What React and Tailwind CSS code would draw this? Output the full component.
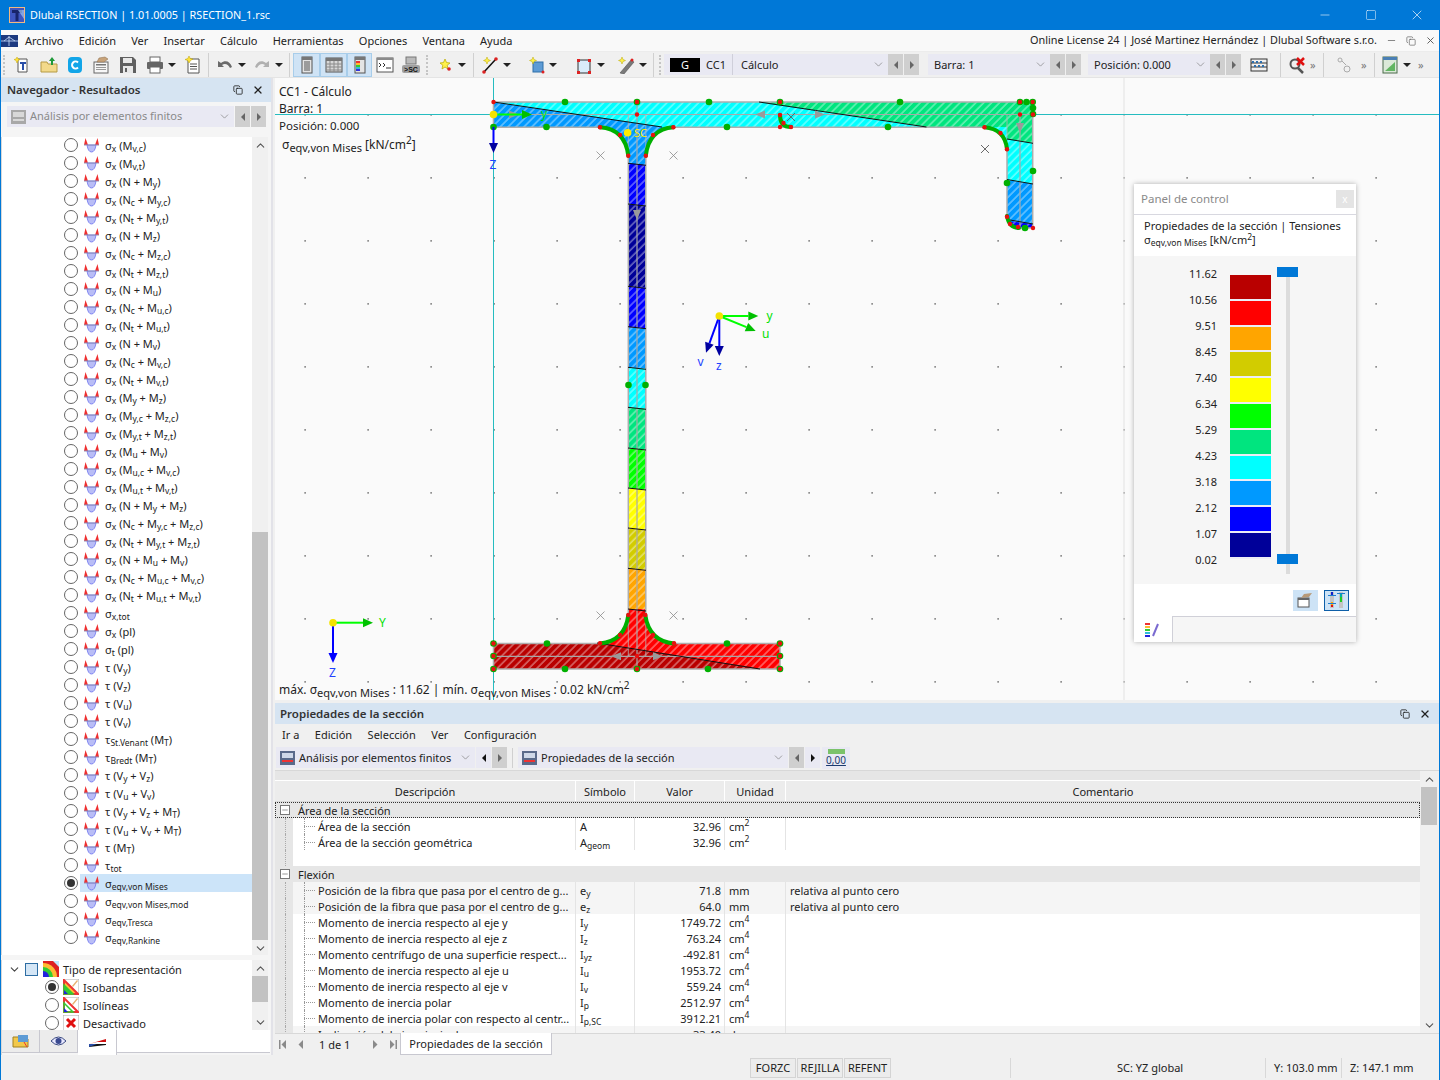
import React from "react";
import { ChevronDown, ChevronUp, Minus, Square, X, Copy } from "lucide-react";

const FONT = "font-['Noto_Sans',sans-serif]";

const LEGEND = [
	["11.62", "#b90000"],
	["10.56", "#ff0000"],
	["9.51", "#ffa500"],
	["8.45", "#d2cc00"],
	["7.40", "#ffff00"],
	["6.34", "#00ff00"],
	["5.29", "#00e57f"],
	["4.23", "#00ffff"],
	["3.18", "#0099ff"],
	["2.12", "#0000ff"],
	["1.07", "#000099"],
];

const RESULTS = [
	"σ_{x} (M_{v,c})",
	"σ_{x} (M_{v,t})",
	"σ_{x} (N + M_{y})",
	"σ_{x} (N_{c} + M_{y,c})",
	"σ_{x} (N_{t} + M_{y,t})",
	"σ_{x} (N + M_{z})",
	"σ_{x} (N_{c} + M_{z,c})",
	"σ_{x} (N_{t} + M_{z,t})",
	"σ_{x} (N + M_{u})",
	"σ_{x} (N_{c} + M_{u,c})",
	"σ_{x} (N_{t} + M_{u,t})",
	"σ_{x} (N + M_{v})",
	"σ_{x} (N_{c} + M_{v,c})",
	"σ_{x} (N_{t} + M_{v,t})",
	"σ_{x} (M_{y} + M_{z})",
	"σ_{x} (M_{y,c} + M_{z,c})",
	"σ_{x} (M_{y,t} + M_{z,t})",
	"σ_{x} (M_{u} + M_{v})",
	"σ_{x} (M_{u,c} + M_{v,c})",
	"σ_{x} (M_{u,t} + M_{v,t})",
	"σ_{x} (N + M_{y} + M_{z})",
	"σ_{x} (N_{c} + M_{y,c} + M_{z,c})",
	"σ_{x} (N_{t} + M_{y,t} + M_{z,t})",
	"σ_{x} (N + M_{u} + M_{v})",
	"σ_{x} (N_{c} + M_{u,c} + M_{v,c})",
	"σ_{x} (N_{t} + M_{u,t} + M_{v,t})",
	"σ_{x,tot}",
	"σ_{x} (pl)",
	"σ_{t} (pl)",
	"τ (V_{y})",
	"τ (V_{z})",
	"τ (V_{u})",
	"τ (V_{v})",
	"τ_{St.Venant} (M_{T})",
	"τ_{Bredt} (M_{T})",
	"τ (V_{y} + V_{z})",
	"τ (V_{u} + V_{v})",
	"τ (V_{y} + V_{z} + M_{T})",
	"τ (V_{u} + V_{v} + M_{T})",
	"τ (M_{T})",
	"τ_{tot}",
	"σ_{eqv,von Mises}",
	"σ_{eqv,von Mises,mod}",
	"σ_{eqv,Tresca}",
	"σ_{eqv,Rankine}",
];

const TABLE = [
	{ head: "Área de la sección", focus: true },
	{ d: "Área de la sección", s: "A", v: "32.96", u: "cm^{2}" },
	{ d: "Área de la sección geométrica", s: "A_{geom}", v: "32.96", u: "cm^{2}" },
	{ blank: true },
	{ head: "Flexión" },
	{ d: "Posición de la fibra que pasa por el centro de g...", s: "e_{y}", v: "71.8", u: "mm", c: "relativa al punto cero", alt: true },
	{ d: "Posición de la fibra que pasa por el centro de g...", s: "e_{z}", v: "64.0", u: "mm", c: "relativa al punto cero", alt: true },
	{ d: "Momento de inercia respecto al eje y", s: "I_{y}", v: "1749.72", u: "cm^{4}" },
	{ d: "Momento de inercia respecto al eje z", s: "I_{z}", v: "763.24", u: "cm^{4}" },
	{ d: "Momento centrífugo de una superficie respect...", s: "I_{yz}", v: "-492.81", u: "cm^{4}" },
	{ d: "Momento de inercia respecto al eje u", s: "I_{u}", v: "1953.72", u: "cm^{4}" },
	{ d: "Momento de inercia respecto al eje v", s: "I_{v}", v: "559.24", u: "cm^{4}" },
	{ d: "Momento de inercia polar", s: "I_{p}", v: "2512.97", u: "cm^{4}" },
	{ d: "Momento de inercia polar con respecto al centr...", s: "I_{p,SC}", v: "3912.21", u: "cm^{4}" },
	{ d: "Inclinación del eje principal", s: "α", v: "33.40", u: "deg", alt: true },
];

// turns "σ_{x} (M_{y})" into text with real sub and sup tags
function Rich({ text, big }) {
	const parts = text.split(/(_\{[^}]*\}|\^\{[^}]*\})/);
	const subClass = big ? "text-[11px]" : "text-[8.5px]";
	return (
		<>
			{parts.map((p, i) => {
				if (p.startsWith("_{")) return <sub key={i} className={subClass}>{p.slice(2, -1)}</sub>;
				if (p.startsWith("^{")) return <sup key={i} className={big ? "text-[10px]" : "text-[8.5px]"}>{p.slice(2, -1)}</sup>;
				return <span key={i}>{p}</span>;
			})}
		</>
	);
}

function Caret() {
	return <span className="w-0 h-0 border-x-[4px] border-x-transparent border-t-[4px] border-t-[#222]" />;
}

function Tb({ w, active, caret, children }) {
	return (
		<div className={`flex items-center justify-center h-[24px] gap-[4px] shrink-0 ${w} ${active ? "bg-[#cfe3f5] border border-[#a8cdea]" : ""}`}>
			{children}
			{caret && <Caret />}
		</div>
	);
}

function Grip() {
	return <div className="w-[3px] h-[20px] mx-[2px] border-l-2 border-dotted border-[#c4c4c4] shrink-0" />;
}

function Divider() {
	return <div className="w-px h-[24px] mx-[3px] bg-[#d0d0d0] shrink-0" />;
}

function Ico({ children }) {
	return <svg width="18" height="18" viewBox="0 0 18 18" className="shrink-0">{children}</svg>;
}

function IconNew() {
	return (
		<Ico>
			<path d="M5 3h9v13H5z" fill="#fff" stroke="#555" />
			<path d="M7 6h6v2H11v6H9V8H7z" fill="#2a4fa8" />
			<path d="M4 1l1 2 2 .5-2 1L4 7 3 4.5 1 3.5 3 3z" fill="#ffe23a" stroke="#c9a800" strokeWidth=".5" />
		</Ico>
	);
}

function IconOpen() {
	return (
		<Ico>
			<path d="M1 6h6l1 2h9v8H1z" fill="#f2d98a" stroke="#b59a45" />
			<path d="M12 1l3 4h-2v4h-2V5H9z" fill="#1f9a3a" />
		</Ico>
	);
}

function IconC() {
	return (
		<Ico>
			<rect x="2" y="1" width="14" height="16" rx="4" fill="#12a5e8" />
			<path d="M12 6.500a3.500 3.500 0 1 0 0 5" fill="none" stroke="#fff" strokeWidth="2" />
		</Ico>
	);
}

function IconReport() {
	return (
		<Ico>
			<rect x="2" y="6" width="14" height="11" fill="#f7f7f7" stroke="#666" />
			<rect x="4" y="8" width="10" height="1.5" fill="#777" />
			<rect x="4" y="11" width="10" height="1" fill="#999" />
			<rect x="4" y="13" width="10" height="1" fill="#999" />
			<path d="M5 6l2-4 6-1 3 2-4 3z" fill="#c7a37a" stroke="#8a6a4a" strokeWidth=".5" />
		</Ico>
	);
}

function IconSave() {
	return (
		<Ico>
			<path d="M1 1h13l3 3v13H1z" fill="#606060" />
			<rect x="4" y="2" width="9" height="5" fill="#e8e8e8" />
			<rect x="4" y="10" width="10" height="7" fill="#e8e8e8" />
			<rect x="6" y="12" width="2" height="4" fill="#606060" />
		</Ico>
	);
}

function IconPrint() {
	return (
		<Ico>
			<rect x="4" y="1" width="10" height="5" fill="#fff" stroke="#666" />
			<rect x="1" y="6" width="16" height="7" rx="1" fill="#666" />
			<rect x="4" y="11" width="10" height="6" fill="#fff" stroke="#666" />
		</Ico>
	);
}

function IconSheet() {
	return (
		<Ico>
			<path d="M4 3h11v14H4z" fill="#fff" stroke="#555" />
			<path d="M6 8h7M6 10.5h7M6 13h7" stroke="#555" />
			<path d="M5 0l1.200 2.500L9 3 6.500 4.500 5 7 3.800 4.500 1 3.500 3.800 2.500z" fill="#ffe23a" stroke="#b8a000" strokeWidth=".5" />
		</Ico>
	);
}

function IconUndo({ color = "#6a6a6a", flip }) {
	return (
		<Ico>
			<g transform={flip ? "translate(18 0) scale(-1 1)" : ""}>
				<path d="M2 5v6h6L6 9c3-2 6-1 8 3l2-1C14 5 9 4 5 7z" fill={color} />
			</g>
		</Ico>
	);
}

function IconColumn({ kind }) {
	return (
		<Ico>
			{kind === "table" ? (
				<>
					<rect x="1" y="2" width="16" height="14" fill="#d8d8d8" stroke="#555" />
					<rect x="1" y="2" width="16" height="3" fill="#777" />
					<path d="M1 8h16M1 11h16M1 14h16M5 5v11M9 5v11M13 5v11" stroke="#8a8a8a" />
				</>
			) : (
				<>
					<rect x="4" y="1" width="10" height="16" fill="#e4e4e4" stroke="#555" />
					<rect x="4" y="1" width="10" height="3" fill="#777" />
					{kind === "color" ? (
						<>
							<rect x="5" y="5" width="4" height="2" fill="#e33" />
							<rect x="5" y="7" width="4" height="2" fill="#fb3" />
							<rect x="5" y="9" width="4" height="2" fill="#3c3" />
							<rect x="5" y="11" width="4" height="2" fill="#3bd" />
							<rect x="5" y="13" width="4" height="2" fill="#33d" />
						</>
					) : (
						<path d="M6 6h6M6 8h6M6 10h6M6 12h6M6 14h6" stroke="#555" />
					)}
				</>
			)}
		</Ico>
	);
}

function IconConsole() {
	return (
		<Ico>
			<rect x="1" y="2" width="16" height="14" fill="#fff" stroke="#555" />
			<rect x="1" y="2" width="16" height="2" fill="#8a8a8a" />
			<path d="M3 7l2 2-2 2M7 7l2 2-2 2M10 12h5" fill="none" stroke="#333" />
		</Ico>
	);
}

function IconSc() {
	return (
		<Ico>
			<rect x="4" y="1" width="10" height="7" fill="#bbb" stroke="#777" />
			<rect x="0" y="9" width="18" height="8" rx="2" fill="#a0a0a0" />
			<text x="9" y="15.5" textAnchor="middle" fontSize="7" fontWeight="700" fill="#111" fontFamily="Liberation Sans">&gt;SC</text>
		</Ico>
	);
}

function IconStar() {
	return (
		<Ico>
			<path d="M9 3l1.500 3.500L14 7l-2.800 2.200L12 13 9 11l-3 2 .8-3.800L4 7l3.500-.5z" fill="#fff04a" stroke="#b8a800" strokeWidth=".7" />
			<circle cx="13" cy="13" r="1.800" fill="#d22" />
		</Ico>
	);
}

function IconLine() {
	return (
		<Ico>
			<path d="M3 16L15 3" stroke="#111" strokeWidth="1.500" />
			<circle cx="15" cy="3" r="1.800" fill="#d22" />
			<circle cx="3" cy="16" r="1.800" fill="#d22" />
			<path d="M6 1l1 2.500 2.500 1L7 5.500 6 8 5 5.500 2.500 4.500 5 3.500z" fill="#fff04a" stroke="#b8a800" strokeWidth=".5" />
		</Ico>
	);
}

function IconBox() {
	return (
		<Ico>
			<rect x="6" y="6" width="10" height="10" fill="#5d9bd5" stroke="#2f6fa8" />
			<circle cx="16" cy="16" r="1.500" fill="#d22" />
			<path d="M6 1l1 2.500 2.500 1L7 5.500 6 8 5 5.500 2.500 4.500 5 3.500z" fill="#fff04a" stroke="#b8a800" strokeWidth=".5" />
		</Ico>
	);
}

function IconFrame() {
	return (
		<Ico>
			<rect x="3" y="4" width="12" height="13" fill="#d9ecfa" stroke="#333" />
			<rect x="2" y="3" width="3" height="3" fill="#d22" />
			<rect x="13" y="3" width="3" height="3" fill="#d22" />
			<rect x="2" y="15" width="3" height="3" fill="#d22" />
			<rect x="13" y="15" width="3" height="3" fill="#d22" />
		</Ico>
	);
}

function IconBeam() {
	return (
		<Ico>
			<path d="M3 17L14 4l3 2L7 18z" fill="#7a7a7a" stroke="#444" strokeWidth=".5" />
			<path d="M5 1l1 2.500 2.500 1L6 5.500 5 8 4 5.500 1.500 4.500 4 3.500z" fill="#fff04a" stroke="#b8a800" strokeWidth=".5" />
			<circle cx="15" cy="4" r="1.500" fill="#d22" />
		</Ico>
	);
}

function IconAbacus() {
	return (
		<Ico>
			<rect x="1" y="3" width="16" height="12" fill="none" stroke="#333" />
			<path d="M1 7h16M1 11h16" stroke="#333" />
			<path d="M3 5v2M7 5v2M11 5v2M5 9v2M9 9v2M13 9v2" stroke="#2a6fb0" strokeWidth="2" />
		</Ico>
	);
}

function IconSearchX() {
	return (
		<Ico>
			<circle cx="7" cy="8" r="4.500" fill="none" stroke="#555" strokeWidth="2" />
			<path d="M10 12l5 5" stroke="#555" strokeWidth="2.500" />
			<path d="M9 2l7 7M16 2L9 9" stroke="#e01010" strokeWidth="2.500" />
		</Ico>
	);
}

function IconNodes() {
	return (
		<Ico>
			<circle cx="5" cy="4" r="2" fill="none" stroke="#aaa" />
			<circle cx="12" cy="13" r="3" fill="none" stroke="#aaa" />
			<path d="M7 5l4 4" stroke="#aaa" />
		</Ico>
	);
}

function IconCalc() {
	return (
		<Ico>
			<rect x="2" y="1" width="14" height="16" fill="#dbe9d8" stroke="#4a6a4a" />
			<rect x="2" y="1" width="14" height="3" fill="#4a7fb5" />
			<path d="M4 15L14 6v9z" fill="#62b562" />
		</Ico>
	);
}

function SheetGlyph({ muted }) {
	return (
		<svg width="15" height="14" viewBox="0 0 15 14" className="shrink-0 -ml-[2px] -mr-[2px]">
			<rect width="15" height="14" fill={muted ? "#a8a8a8" : "#5a6a8a"} />
			<rect x="2" y="2" width="11" height="5" fill={muted ? "#d8d8d8" : "#cfd8e8"} />
			<rect x="2" y="9" width="11" height="2" fill={muted ? "#d8d8d8" : "#e33"} />
		</svg>
	);
}

function Combo({ w, children, muted }) {
	return (
		<div className={`flex items-center justify-between h-[21px] bg-[#e9e9f3] shrink-0 pl-[6px] pr-[3px] ${w} ${muted ? "text-[#8a8a8a]" : ""}`}>
			<div className="flex items-center gap-[6px] min-w-0 whitespace-nowrap">{children}</div>
			<ChevronDown size={13} strokeWidth={1.2} color="#777" className="shrink-0" />
		</div>
	);
}

function StepBtns({ dimLeft, dimRight }) {
	return (
		<div className="flex h-[21px] shrink-0">
			<div className={`w-[15px] flex items-center justify-center ${dimLeft ? "bg-[#cfcfcf]" : "bg-[#e9e9f3]"}`}>
				<span className={`w-0 h-0 border-y-[4px] border-y-transparent border-r-[4px] ${dimLeft ? "border-r-[#666]" : "border-r-[#111]"}`} />
			</div>
			<div className={`w-[15px] ml-px flex items-center justify-center ${dimRight ? "bg-[#cfcfcf]" : "bg-[#e9e9f3]"}`}>
				<span className={`w-0 h-0 border-y-[4px] border-y-transparent border-l-[4px] ${dimRight ? "border-l-[#666]" : "border-l-[#111]"}`} />
			</div>
		</div>
	);
}

function ListGlyph() {
	return (
		<svg width="17" height="15" viewBox="0 0 17 15" className="shrink-0">
			<path d="M1 7L2.500 0 5 7z" fill="#ef3030" />
			<path d="M12 7l2.500-7L16 7z" fill="#ef3030" />
			<path d="M4 7h9q-1 7-4.500 7T4 7z" fill="#b9bdf6" stroke="#5f66ee" strokeWidth=".7" />
			<path d="M1 7h15" stroke="#8f8fb8" strokeWidth="1" />
		</svg>
	);
}

function Radio({ on }) {
	return (
		<span className="w-[14px] h-[14px] rounded-full border border-[#666] bg-white flex items-center justify-center shrink-0">
			{on && <span className="w-[8px] h-[8px] rounded-full bg-[#333]" />}
		</span>
	);
}

function ScrollArrow({ up }) {
	return (
		<div className="h-[16px] flex items-center justify-center shrink-0">
			{up ? <ChevronUp size={13} strokeWidth={2} color="#555" /> : <ChevronDown size={13} strokeWidth={2} color="#555" />}
		</div>
	);
}

function Navigator() {
	return (
		<div className="w-[272px] shrink-0 flex flex-col border-r-2 border-[#e2e2e8] bg-[#f5f5f5]">
			<div className="h-[24px] flex items-center justify-between bg-[#d6e4f2] pl-[6px] pr-[7px] shrink-0">
				<span className="text-[11.500px] font-semibold text-[#333]">Navegador - Resultados</span>
				<div className="flex items-center gap-[9px]">
					<Copy size={10} strokeWidth={2} color="#222" />
					<X size={12} strokeWidth={2.5} color="#222" />
				</div>
			</div>
			<div className="h-[35px] pt-[4px] pl-[6px] flex shrink-0 gap-px">
				<Combo w="w-[227px]" muted>
					<SheetGlyph muted />
					<span className="text-[11px]">Análisis por elementos finitos</span>
				</Combo>
				<StepBtns dimLeft dimRight />
			</div>
			<div className="h-[818px] flex bg-white border-l border-[#d8d8d8] shrink-0 mr-[3px]">
				<div className="flex-1 min-w-0 overflow-hidden -mt-px">
					{RESULTS.map((label, i) => {
						const selected = label === "σ_{eqv,von Mises}";
						return (
							<div key={i} className="h-[18px] flex items-center pl-[62px] text-[11px] text-[#222] leading-none">
								<Radio on={selected} />
								<div className={`flex items-center gap-[5px] h-full pl-[3px] ml-[2px] flex-1 ${selected ? "bg-[#cce4f9]" : ""}`}>
									<ListGlyph />
									<span className="whitespace-nowrap"><Rich text={label} /></span>
								</div>
							</div>
						);
					})}
				</div>
				<div className="w-[16px] bg-[#f0f0f0] flex flex-col shrink-0">
					<ScrollArrow up />
					<div className="h-[379px] shrink-0" />
					<div className="h-[408px] bg-[#c2c2c2] shrink-0" />
					<div className="flex-1" />
					<ScrollArrow />
				</div>
			</div>
			<div className="h-[5px] shrink-0" />
			<div className="h-[70px] flex bg-white border-l border-[#d8d8d8] shrink-0 overflow-hidden mr-[3px]">
				<div className="flex-1 min-w-0 text-[11px] text-[#222] leading-none">
					<div className="h-[18px] flex items-center pl-[6px] gap-[4px]">
						<ChevronDown size={13} strokeWidth={2} color="#444" />
						<span className="w-[13px] h-[13px] border border-[#2d6da3] bg-[#d4e6f6] shrink-0" />
						<svg width="16" height="16" viewBox="0 0 16 16" className="shrink-0 ml-px">
							<rect width="16" height="16" fill="#d22" />
							<path d="M0 16V2a14 14 0 0 1 14 14z" fill="#fb3" />
							<path d="M0 16V6a10 10 0 0 1 10 10z" fill="#3c3" />
							<path d="M0 16v-6a6 6 0 0 1 6 6z" fill="#22d" />
							<path d="M10 0h6v6z" fill="#bfeaff" />
						</svg>
						<span>Tipo de representación</span>
					</div>
					{["Isobandas", "Isolíneas", "Desactivado"].map((t, i) => (
						<div key={t} className="h-[18px] flex items-center pl-[43px] gap-[4px]">
							<Radio on={i === 0} />
							<svg width="16" height="16" viewBox="0 0 16 16" className="shrink-0">
								<rect width="16" height="16" fill="#fff" stroke="#aaa" />
								{i < 2 && <path d="M1 1v14h14z" fill={i === 0 ? "#fb3" : "none"} stroke="#e33" strokeWidth="2" />}
								{i < 2 && <path d="M1 6v9h9z" fill={i === 0 ? "#3c3" : "none"} stroke="#3c3" strokeWidth="1.5" />}
								{i < 2 && <path d="M1 11v4h4z" fill="#22d" />}
								{i < 2 && <path d="M9 7l5-6 1 1-5 6z" fill="#e8b070" />}
								{i === 2 && <path d="M4 4l8 8M12 4l-8 8" stroke="#e01010" strokeWidth="3" />}
							</svg>
							<span>{t}</span>
						</div>
					))}
				</div>
				<div className="w-[16px] bg-[#f0f0f0] flex flex-col shrink-0">
					<ScrollArrow up />
					<div className="h-[26px] bg-[#c2c2c2] shrink-0" />
					<div className="flex-1" />
					<ScrollArrow />
				</div>
			</div>
			<div className="flex-1 flex items-start border-l border-[#d8d8d8] mr-[1px]">
				<div className="w-[38px] h-[23px] bg-[#ececec] border-r border-b border-[#c8c8d0] flex items-center justify-center">
					<svg width="17" height="15" viewBox="0 0 17 15"><path d="M1 3h6l1 2h8v8H1z" fill="#f2c84a" stroke="#a08020" /><rect x="6" y="1" width="10" height="7" fill="#5d9bd5" /><path d="M12 8l3 5" stroke="#e33" /></svg>
				</div>
				<div className="w-[38px] h-[23px] bg-[#ececec] border-r border-b border-[#c8c8d0] flex items-center justify-center">
					<svg width="15" height="10" viewBox="0 0 15 10"><path d="M0 5q7.500-8 15 0-7.500 8-15 0z" fill="#e8e8ff" stroke="#3a4a80" /><circle cx="7.500" cy="5" r="3" fill="#3a4a90" /></svg>
				</div>
				<div className="w-[39px] h-[25px] bg-white border-r border-[#c8c8d0] flex items-center justify-center">
					<svg width="17" height="8" viewBox="0 0 17 8"><path d="M0 5L17 0v3H8z" fill="#d01010" /><path d="M0 8V5h17v1z" fill="#111" /><path d="M0 5h8l-8 3z" fill="#2a4fa8" /></svg>
				</div>
				<div className="flex-1 border-b border-[#c8c8d0] h-[23px] bg-white" />
			</div>
		</div>
	);
}

// web isoband positions in page pixels, top to bottom
const WEB = [
	[164, 205, "#0000ff"],
	[205, 287, "#000099"],
	[287, 328, "#0000ff"],
	[328, 368, "#0099ff"],
	[368, 408, "#00ffff"],
	[408, 449, "#00e57f"],
	[449, 489, "#00ff00"],
	[489, 529, "#ffff00"],
	[529, 569, "#d2cc00"],
	[569, 610, "#ffa500"],
];

const GREEN_DOTS = [
	[565, 102], [637, 102], [709, 102], [780, 102], [900, 102], [1020, 102], [1026.5, 102], [1032.7, 102],
	[493.5, 127], [546.5, 127], [727, 127], [888, 127], [1033, 108], [1033, 114], [1033, 171], [1007, 183],
	[1025, 228], [628.5, 385], [645.5, 385], [493.5, 643.5], [493.5, 656], [493.5, 669], [565, 669],
	[637, 669], [708, 669], [780, 643.5], [780, 656], [780, 669], [547, 643.5], [727, 643.5],
];

const RED_DOTS = [
	[493.5, 102], [637, 102], [780, 102], [1020, 102], [1032.7, 102], [637, 114.5], [1020, 114.5],
	[1033, 114.5], [780, 115], [780, 127], [783.5, 123], [791, 127], [600, 127.3], [673.4, 127.3],
	[620, 135], [653, 135], [628.3, 155.7], [645.8, 155.7], [984.5, 127.3], [1000.5, 133],
	[1007, 149.3], [1007, 216.7], [1010, 224], [1018, 227], [1033, 228], [493.5, 643.5], [600, 643.3],
	[674, 643.3], [620, 635], [653, 635], [628.3, 615], [645.3, 615], [637, 656], [637, 669], [493.5, 656],
	[780, 656], [493.5, 669], [780, 669], [780, 643.5],
];

const SECTION =
	"M493.5 102H1032.7V228H1019Q1009 228 1007 216V149.3Q1005 129 984.5 127.3H673.4Q649 129 645.8 155.7V615Q649 641 674 643.5H780V669H493.5V643.5H600Q625 641 628.3 615V155.7Q625 129 600 127.3H493.5Z";

function Arrow({ x1, y1, x2, y2, color, dark }) {
	const a = Math.atan2(y2 - y1, x2 - x1);
	const l = 10;
	const w = 4.5;
	const bx = x2 - l * Math.cos(a);
	const by = y2 - l * Math.sin(a);
	const px = -Math.sin(a) * w;
	const py = Math.cos(a) * w;
	return (
		<g>
			<line x1={x1} y1={y1} x2={bx} y2={by} stroke={color} strokeWidth="2" />
			<polygon points={`${x2},${y2} ${bx + px},${by + py} ${bx - px},${by - py}`} fill={dark || color} />
		</g>
	);
}

function Tri({ x, y, dir }) {
	const pts = {
		r: `${x - 5},${y - 4} ${x + 5},${y} ${x - 5},${y + 4}`,
		l: `${x + 5},${y - 4} ${x - 5},${y} ${x + 5},${y + 4}`,
		d: `${x - 4},${y - 5} ${x + 4},${y - 5} ${x},${y + 5}`,
	};
	return <polygon points={pts[dir]} fill="#9a9a9a" />;
}

function Cross({ x, y, c = "#8a8a8a" }) {
	return <path d={`M${x - 4} ${y - 4}l8 8M${x + 4} ${y - 4}l-8 8`} stroke={c} strokeWidth=".8" fill="none" />;
}

function SectionDrawing() {
	const gridX = Array.from({ length: 18 }, (_, i) => 304.5 + i * 63);
	const gridY = Array.from({ length: 10 }, (_, i) => 114.3 + i * 63);
	return (
		<svg className="absolute inset-0 w-full h-full" viewBox="275 78 1164 622">
			<defs>
				<clipPath id="sec"><path d={SECTION} /></clipPath>
				<pattern id="hatch" width="5.6" height="8" patternUnits="userSpaceOnUse" patternTransform="rotate(45)">
					<line x1="1" y1="0" x2="1" y2="8" stroke="#fff" strokeWidth=".9" opacity=".75" />
				</pattern>
			</defs>
			{gridX.map((x) => gridY.map((y) => <rect key={x + "-" + y} x={x} y={y} width="1.2" height="1.2" fill="#222" />))}
			<line x1="1124" y1="78" x2="1124" y2="700" stroke="#e2e2e2" />
			<line x1="275" y1="114.5" x2="1440" y2="114.5" stroke="#25bcc0" />
			<line x1="493.5" y1="78" x2="493.5" y2="700" stroke="#25bcc0" />

			<g clipPath="url(#sec)">
				<rect x="490" y="100" width="550" height="135" fill="#00ffff" />
				<polygon points="493,102 662,127 674,127 674,164 600,164 600,127 493,127" fill="#0099ff" />
				<polygon points="759,102 926.4,127 1007,127 1007,139 1033,143.3 1033,102" fill="#00e57f" />
				<polygon points="1000,179 1033,184 1033,224 1000,220" fill="#0099ff" />
				<polygon points="1000,220 1033,224 1033,232 1000,232" fill="#0000ff" />
				{WEB.map(([a, b, c]) => (
					<polygon key={a} points={`620,${a - 1} 655,${a + 1} 655,${b + 1} 620,${b - 1}`} fill={c} />
				))}
				<rect x="490" y="609" width="300" height="62" fill="#ff0000" />
				<polygon points="490,643 597,643 760,669 760,672 490,672" fill="#b90000" />
				<rect x="490" y="100" width="560" height="575" fill="url(#hatch)" />
				<path d="M493 114.5H1033M637 102V669M1020 114.5V228M493 656.3H780" stroke="#a8a8a8" strokeWidth="1.2" />
				<path d="M628.3 114.5V156M645.8 114.5V156M628.3 615V656M645.8 615V656M1007 114.5V140" stroke="#b4b4b4" strokeWidth=".8" />
			</g>
			<path d={SECTION} fill="none" stroke="#adadad" strokeWidth="1.5" />
			<path
				d="M493.5 102L662 127M759 102L926.4 127M1007 139L1033 143.3M1007 179.5L1033 184M1010 220L1033 224M628 163.3L646 165.3M628 204L646 206M628 286.3L646 288.3M628 326.7L646 328.7M628 367.3L646 369.3M628 407.3L646 409.3M628 448L646 450M628 488L646 490M628 528L646 530M628 568.3L646 570.3M628 609L646 611M597 643L760 669"
				stroke="#111"
				strokeWidth="1"
				fill="none"
			/>

			<Tri x={514} y={114.5} dir="r" />
			<Tri x={760} y={114.5} dir="l" />
			<Tri x={820} y={114.5} dir="r" />
			<Tri x={637} y={215} dir="d" />
			<Tri x={1020} y={128} dir="d" />
			<Tri x={616} y={656.3} dir="l" />
			<Tri x={658} y={656.3} dir="r" />

			<g fill="none" stroke="#00b000" strokeWidth="4" strokeLinecap="round">
				<path d="M600 127.3Q625 129 628.3 155.7" />
				<path d="M673.4 127.3Q649 129 645.8 155.7" />
				<path d="M600 643.5Q625 641 628.3 615" />
				<path d="M674 643.5Q649 641 645.3 615" />
				<path d="M984.5 127.3Q1005 129 1007 149.3" />
				<path d="M1007 216Q1009 228 1019 228" />
				<path d="M780 115Q780 127 791 127" />
			</g>
			{GREEN_DOTS.map(([x, y], i) => <circle key={i} cx={x} cy={y} r="3.3" fill="#00b000" />)}
			{RED_DOTS.map(([x, y], i) => <circle key={i} cx={x} cy={y} r="2.2" fill="#e81010" />)}

			<Cross x={600.5} y={155.5} />
			<Cross x={673.5} y={155.5} />
			<Cross x={985} y={149} c="#444" />
			<Cross x={791} y={117} c="#555" />
			<Cross x={600.5} y={615.5} />
			<Cross x={673.5} y={615.5} />

			<circle cx="627.6" cy="132.7" r="3.8" fill="#ffee00" />
			<text x="634" y="137" fontSize="11" fill="#ffee00" fontFamily="Noto Sans">SC</text>

			<g fontFamily="Noto Sans" fontSize="12">
				<Arrow x1={493.5} y1={114.5} x2={532} y2={114.5} color="#00ff00" dark="#00c000" />
				<text x="541" y="118" fill="#00e000">y</text>
				<Arrow x1={493.5} y1={127} x2={493.5} y2={153} color="#0000ff" dark="#0000a0" />
				<text x="489.500" y="169" fill="#2040ff">Z</text>
				<circle cx="493.5" cy="114.5" r="3.8" fill="#f4e300" />

				<Arrow x1={719.3} y1={316} x2={758.3} y2={316} color="#00ff00" dark="#00c000" />
				<Arrow x1={719.3} y1={316} x2={755.7} y2={331} color="#00ff00" dark="#00c000" />
				<Arrow x1={719.3} y1={316} x2={706} y2={352.7} color="#0000ff" dark="#0000a0" />
				<Arrow x1={719.3} y1={316} x2={719.3} y2={356} color="#0000ff" dark="#0000a0" />
				<text x="766.5" y="320" fill="#00e000">y</text>
				<text x="762" y="338" fill="#00e000">u</text>
				<text x="697.5" y="366" fill="#2040ff">v</text>
				<text x="716" y="370" fill="#2040ff">z</text>
				<circle cx="719.3" cy="316" r="3.8" fill="#f4e300" />

				<Arrow x1={333} y1={622.7} x2={373} y2={622.7} color="#00ff00" dark="#00c000" />
				<Arrow x1={333} y1={622.7} x2={333} y2={663} color="#0000ff" />
				<text x="379" y="627" fill="#00e000">Y</text>
				<text x="329" y="677" fill="#2040ff">Z</text>
				<circle cx="333" cy="622.7" r="3.8" fill="#f4e300" />
			</g>
		</svg>
	);
}

function ControlPanel() {
	return (
		<div className="absolute left-[859px] top-[106px] w-[222px] h-[458px] bg-white shadow-[0_0_5px_rgba(0,0,0,0.3)] flex flex-col">
			<div className="h-[31px] flex items-center justify-between pl-[7px] pr-[2px] border-b border-[#d8d8e0] shrink-0">
				<span className="text-[11.500px] text-[#8a8a8a]">Panel de control</span>
				<div className="w-[18px] h-[18px] bg-[#e4e4e4] flex items-center justify-center text-[10px] text-white">x</div>
			</div>
			<div className="h-[41px] pl-[10px] pt-[4px] text-[11px] leading-[14px] text-[#222] shrink-0">
				<div className="whitespace-nowrap">Propiedades de la sección | Tensiones</div>
				<div className="whitespace-nowrap"><Rich text="σ_{eqv,von Mises} [kN/cm^{2}]" /></div>
			</div>
			<div className="h-[328px] bg-[#f6f6f6] flex pt-[5px] shrink-0">
				<div className="w-[83px] flex flex-col items-end text-[11px] text-[#222] leading-[26px]">
					{LEGEND.map(([v]) => <div key={v} className="h-[26px]">{v}</div>)}
					<div className="h-[26px]">0.02</div>
				</div>
				<div className="w-[41px] ml-[13px] mt-[14px] flex flex-col">
					{LEGEND.map(([v, c]) => (
						<div key={v} className="h-[25.8px] border-b-2 border-[#ececf6]" style={{ backgroundColor: c }} />
					))}
				</div>
				<div className="relative w-[21px] ml-[6px] mt-[6px] flex justify-center">
					<div className="w-[4px] h-[298px] bg-[#dcdcdc] mt-[9px]" />
					<div className="absolute top-0 left-0 w-[21px] h-[10px] bg-[#0078d7]" />
					<div className="absolute top-[287px] left-0 w-[21px] h-[10px] bg-[#0078d7]" />
				</div>
			</div>
			<div className="h-[32px] flex items-center justify-end gap-[6px] pr-[7px] shrink-0">
				<div className="w-[25px] h-[21px] bg-[#cde3f6] flex items-center justify-center">
					<svg width="17" height="15" viewBox="0 0 17 15"><rect x="1" y="5" width="11" height="9" fill="#fff" stroke="#555" /><rect x="1" y="5" width="11" height="2" fill="#666" /><path d="M4 5l3-4 8-1-3 4z" fill="#b89a78" /></svg>
				</div>
				<div className="w-[25px] h-[21px] bg-[#cde3f6] border border-[#0e5fa8] flex items-center justify-center">
					<svg width="19" height="16" viewBox="0 0 19 16">
						<rect x="3" y="0" width="4" height="16" fill="#c4c4c4" />
						<rect x="12" y="0" width="4" height="16" fill="#c4c4c4" />
						<rect x="4" y="0" width="2" height="3" fill="#1122cc" />
						<rect x="13" y="2" width="2" height="3" fill="#0aa" />
						<rect x="13" y="5" width="2" height="5" fill="#2c2" />
						<rect x="4" y="10" width="2" height="3" fill="#fa0" />
						<rect x="4" y="13" width="2" height="2" fill="#d11" />
						<rect x="1" y="3" width="8" height="1" fill="#1e7fd0" />
						<rect x="10" y="1" width="8" height="1" fill="#1e7fd0" />
						<rect x="1" y="11" width="8" height="1" fill="#1e7fd0" />
					</svg>
				</div>
			</div>
			<div className="flex-1 flex">
				<div className="w-[39px] flex items-center justify-center border-r border-[#d0d0d8]">
					<svg width="16" height="15" viewBox="0 0 16 15">
						<rect x="0" y="1" width="5" height="2" fill="#e33" />
						<rect x="0" y="4" width="5" height="2" fill="#fb3" />
						<rect x="0" y="7" width="5" height="2" fill="#3c3" />
						<rect x="0" y="10" width="5" height="2" fill="#3bd" />
						<rect x="0" y="13" width="5" height="2" fill="#22d" />
						<path d="M8 14l5-12" stroke="#7a6ad0" strokeWidth="2" />
					</svg>
				</div>
				<div className="flex-1 bg-[#f6f6f6] border-t border-[#d0d0d8]" />
			</div>
		</div>
	);
}

function Gutter() {
	return (
		<div className="w-[18px] bg-[#e6e6e6] shrink-0 relative">
			<span className="absolute left-[10px] top-0 h-full border-l border-dotted border-[#aaa]" />
		</div>
	);
}

function TableRow({ row }) {
	const cols = "border-r border-[#e4e4e4] h-full shrink-0 flex items-center";
	if (row.blank) {
		return (
			<div className="h-[16px] flex">
				<Gutter />
				<div className="flex-1 bg-white" />
			</div>
		);
	}
	if (row.head) {
		return (
			<div className={`h-[16px] flex items-center bg-[#e6e6e6] ${row.focus ? "outline-1 outline-dotted outline-[#333] -outline-offset-1" : ""}`}>
				<span className="ml-[5px] w-[10px] h-[10px] bg-white border border-[#777] flex items-center justify-center shrink-0">
					<Minus size={8} strokeWidth={1.5} color="#333" />
				</span>
				<span className="ml-[8px]">{row.head}</span>
			</div>
		);
	}
	return (
		<div className="h-[16px] flex">
			<Gutter />
			<div className={`flex flex-1 items-center min-w-0 ${row.alt ? "bg-[#f5f5f5]" : "bg-white"}`}>
				<div className={`w-[283px] pl-[25px] relative whitespace-nowrap overflow-hidden ${cols}`}>
					<span className="absolute left-[11px] top-0 h-full border-l border-dotted border-[#999]" />
					<span className="absolute left-[11px] top-[8px] w-[11px] border-t border-dotted border-[#999]" />
					{row.d}
				</div>
				<div className={`w-[59px] pl-[4px] ${cols}`}><span><Rich text={row.s} /></span></div>
				<div className={`w-[90px] justify-end pr-[3px] ${cols}`}>{row.v}</div>
				<div className={`w-[61px] pl-[4px] ${cols}`}><span><Rich text={row.u} /></span></div>
				<div className="pl-[4px] flex-1 whitespace-nowrap">{row.c}</div>
			</div>
		</div>
	);
}

function PageArrow({ flip, bar }) {
	return (
		<svg width="8" height="9" viewBox="0 0 8 9" className="shrink-0">
			<g transform={flip ? "translate(8 0) scale(-1 1)" : ""} fill="#8a8a8a">
				<path d="M7 0v9L2.500 4.500z" />
				{bar && <rect x="0" y="0" width="1.500" height="9" />}
			</g>
		</svg>
	);
}

function BottomPanel() {
	return (
		<div className="flex-1 flex flex-col min-h-0 text-[11px] text-[#222] leading-none">
			<div className="h-[21px] bg-[#d6e4f2] flex items-center justify-between pl-[5px] pr-[8px] shrink-0">
				<span className="text-[11.500px] font-semibold text-[#333]">Propiedades de la sección</span>
				<div className="flex items-center gap-[9px]">
					<Copy size={10} strokeWidth={2} color="#222" />
					<X size={12} strokeWidth={2.5} color="#222" />
				</div>
			</div>
			<div className="h-[21px] flex items-center gap-[15.500px] pl-[7px] shrink-0">
				<span>Ir a</span>
				<span>Edición</span>
				<span>Selección</span>
				<span>Ver</span>
				<span>Configuración</span>
			</div>
			<div className="h-[26px] flex items-center pl-[1px] shrink-0 border-b border-[#d8d8d8]">
				<Combo w="w-[199px]">
					<SheetGlyph />
					<span>Análisis por elementos finitos</span>
				</Combo>
				<div className="w-px" />
				<StepBtns dimRight />
				<div className="w-px h-[20px] bg-[#d0d0d0] mx-[5px]" />
				<Combo w="w-[270px]">
					<SheetGlyph />
					<span>Propiedades de la sección</span>
				</Combo>
				<div className="w-px" />
				<StepBtns dimLeft />
				<div className="w-[28px] h-[22px] ml-[2px] bg-[#e9e9f3] flex flex-col items-center justify-center">
					<span className="w-[17px] h-[5px] bg-[#7bc26a]" />
					<span className="text-[10px] leading-[12px] underline text-[#1b3a70]">0,00</span>
				</div>
			</div>
			<div className="flex-1 flex min-h-0">
				<div className="flex-1 min-w-0 overflow-hidden">
					<div className="h-[10px] bg-[#e6e6e6] border-b border-white" />
					<div className="h-[21px] flex items-center bg-[#ececec] text-center border-b border-[#d8d8d8]">
						<div className="w-[301px] border-r border-white h-full flex items-center justify-center">Descripción</div>
						<div className="w-[59px] border-r border-white h-full flex items-center justify-center">Símbolo</div>
						<div className="w-[90px] border-r border-white h-full flex items-center justify-center">Valor</div>
						<div className="w-[61px] border-r border-white h-full flex items-center justify-center">Unidad</div>
						<div className="flex-1 h-full flex items-center justify-center">Comentario</div>
					</div>
					{TABLE.map((row, i) => <TableRow key={i} row={row} />)}
				</div>
				<div className="w-[16px] bg-[#f0f0f0] flex flex-col shrink-0 ml-px mr-[2px]">
					<ScrollArrow up />
					<div className="h-[38px] bg-[#c2c2c2] shrink-0" />
					<div className="flex-1" />
					<ScrollArrow />
				</div>
			</div>
			<div className="h-[22px] flex items-start bg-[#f0f0f0] shrink-0 border-t border-[#d8d8d8]">
				<div className="w-[125px] h-[21px] flex items-center pl-[4px]">
					<PageArrow bar />
					<div className="w-[9px]" />
					<PageArrow />
					<div className="w-[15px]" />
					<span className="w-[53px]">1 de 1</span>
					<PageArrow flip />
					<div className="w-[9px]" />
					<PageArrow flip bar />
				</div>
				<div className="h-[22px] w-[152px] -mt-px bg-white border-x border-b border-[#c8c8d0] flex items-center justify-center">Propiedades de la sección</div>
			</div>
		</div>
	);
}

function StatusBar() {
	const cell = "h-[20px] px-[3px] flex items-center justify-center bg-[#ececec] border border-[#d4d4d4] mr-px";
	return (
		<div className="h-[25px] bg-[#f0f0f0] flex items-center text-[11px] text-[#222] leading-none shrink-0 pl-[749px]">
			<div className={`${cell} w-[46px]`}>FORZC</div>
			<div className={`${cell} w-[46px]`}>REJILLA</div>
			<div className={`${cell} w-[47px]`}>REFENT</div>
			<div className="w-px h-[20px] bg-[#d8d8d8] ml-[118px]" />
			<span className="ml-[106px] w-[148px]">SC: YZ global</span>
			<div className="w-px h-[20px] bg-[#d8d8d8] mr-[8px]" />
			<span className="w-[67px]">Y: 103.0 mm</span>
			<div className="w-px h-[20px] bg-[#d8d8d8] mr-[8px]" />
			<span>Z: 147.1 mm</span>
		</div>
	);
}

function App() {
	return (
		<div className={`w-[1440px] h-[1080px] overflow-hidden flex flex-col bg-[#f0f0f0] border-x border-[#0078d7] ${FONT}`}>
			<div className="h-[30px] -mx-px bg-[#0078d7] flex items-center justify-between text-white shrink-0">
				<div className="flex items-center pl-[9px] gap-[5px] text-[10.800px]">
					<svg width="16" height="16" viewBox="0 0 16 16">
						<rect x=".5" y=".5" width="15" height="15" fill="#3f56c0" stroke="#f2b880" />
						<path d="M3 3h10v3H9.500v8H6.500V6H3z" fill="#18246b" />
						<path d="M9 3h6v9z" fill="#9fc4f5" opacity=".7" />
					</svg>
					<span>Dlubal RSECTION | 1.01.0005 | RSECTION_1.rsc</span>
				</div>
				<div className="flex items-center h-full">
					<div className="w-[46px] flex justify-center"><Minus size={14} strokeWidth={1} /></div>
					<div className="w-[46px] flex justify-center"><Square size={12} strokeWidth={1} /></div>
					<div className="w-[46px] flex justify-center"><X size={16} strokeWidth={1} /></div>
				</div>
			</div>
			<div className="h-[22px] bg-[#f9f9f9] flex items-center justify-between text-[11px] text-[#222] leading-none shrink-0 border-b border-[#ececec]">
				<div className="flex items-center">
					<svg width="17" height="12" viewBox="0 0 17 12" className="mr-[7px]">
						<rect width="17" height="12" fill="#1d3a80" />
						<path d="M0 6h17M8 1v10M3 6l5-4 6 4" stroke="#cfe3ff" strokeWidth=".8" fill="none" />
					</svg>
					<div className="flex gap-[15.200px]">
						<span>Archivo</span>
						<span>Edición</span>
						<span>Ver</span>
						<span>Insertar</span>
						<span>Cálculo</span>
						<span>Herramientas</span>
						<span>Opciones</span>
						<span>Ventana</span>
						<span>Ayuda</span>
					</div>
				</div>
				<div className="flex items-center pr-[3px]">
					<span className="mr-[9px] text-[10.850px]">Online License 24 | José Martinez Hernández | Dlubal Software s.r.o.</span>
					<div className="flex items-center gap-[9px] text-[#555]">
						<Minus size={11} strokeWidth={1.5} />
						<Copy size={10} strokeWidth={1.5} />
						<X size={11} strokeWidth={2} />
					</div>
				</div>
			</div>
			<div className="h-[26px] bg-[#f0f0f0] flex items-center text-[11px] text-[#222] leading-none shrink-0 border-b border-[#e4e4e4]">
				<Grip />
				<Tb w="w-[28px]"><IconNew /></Tb>
				<Tb w="w-[25px]"><IconOpen /></Tb>
				<Tb w="w-[27px]"><IconC /></Tb>
				<Tb w="w-[26px]"><IconReport /></Tb>
				<Tb w="w-[27px]"><IconSave /></Tb>
				<Tb w="w-[40px]" caret><IconPrint /></Tb>
				<Tb w="w-[24px]"><IconSheet /></Tb>
				<Divider />
				<Tb w="w-[38px]" caret><IconUndo /></Tb>
				<Tb w="w-[36px]" caret><IconUndo color="#b0b0b0" flip /></Tb>
				<Divider />
				<Tb w="w-[27px]" active><IconColumn /></Tb>
				<Tb w="w-[27px]" active><IconColumn kind="table" /></Tb>
				<Tb w="w-[25px]" active><IconColumn kind="color" /></Tb>
				<Tb w="w-[26px]"><IconConsole /></Tb>
				<Tb w="w-[26px]"><IconSc /></Tb>
				<Grip />
				<Tb w="w-[39px]" caret><IconStar /></Tb>
				<Divider />
				<Tb w="w-[37px]" caret><IconLine /></Tb>
				<Tb w="w-[9px]" />
				<Tb w="w-[37px]" caret><IconBox /></Tb>
				<Tb w="w-[11px]" />
				<Tb w="w-[37px]" caret><IconFrame /></Tb>
				<Tb w="w-[5px]" />
				<Tb w="w-[37px]" caret><IconBeam /></Tb>
				<Divider />
				<Grip />
				<Combo w="w-[224px]">
					<span className="w-[30px] h-[14px] bg-black text-white flex items-center justify-center text-[11px]">G</span>
					<span className="border-r border-[#cfcfda] pr-[6px] h-[21px] flex items-center">CC1</span>
					<span className="ml-[2px]">Cálculo</span>
				</Combo>
				<StepBtns dimLeft dimRight />
				<div className="w-[9px]" />
				<Combo w="w-[122px]"><span>Barra: 1</span></Combo>
				<StepBtns dimLeft dimRight />
				<div className="w-[7px]" />
				<Combo w="w-[122px]"><span>Posición: 0.000</span></Combo>
				<StepBtns dimLeft dimRight />
				<Tb w="w-[36px]"><IconAbacus /></Tb>
				<Divider />
				<Tb w="w-[26px]"><IconSearchX /></Tb>
				<span className="text-[#777] w-[10px]">»</span>
				<Divider />
				<Tb w="w-[34px]"><IconNodes /></Tb>
				<span className="text-[#777] w-[10px]">»</span>
				<Divider />
				<Tb w="w-[36px]" caret><IconCalc /></Tb>
				<span className="text-[#777] ml-[4px]">»</span>
			</div>
			<div className="flex-1 flex min-h-0">
				<Navigator />
				<div className="flex-1 flex flex-col min-w-0 pl-[2px]">
					<div className="h-[622px] relative bg-[#fafafa] shrink-0 overflow-hidden">
						<SectionDrawing />
						<div className="absolute left-[4px] top-[5px] text-[12px] text-[#222] leading-[17px] whitespace-nowrap">
							<div>CC1 - Cálculo</div>
							<div>Barra: 1</div>
							<div className="text-[11.500px]">Posición: 0.000</div>
							<div className="ml-[3px] mt-[2px]"><Rich big text="σ_{eqv,von Mises} [kN/cm^{2}]" /></div>
						</div>
						<div className="absolute left-[4px] top-[603px] text-[12px] text-[#222] whitespace-nowrap">
							<Rich big text="máx. σ_{eqv,von Mises} : 11.62 | mín. σ_{eqv,von Mises} : 0.02 kN/cm^{2}" />
						</div>
						<ControlPanel />
					</div>
					<div className="h-[3px] shrink-0" />
					<BottomPanel />
				</div>
			</div>
			<StatusBar />
		</div>
	);
}

export default App;
